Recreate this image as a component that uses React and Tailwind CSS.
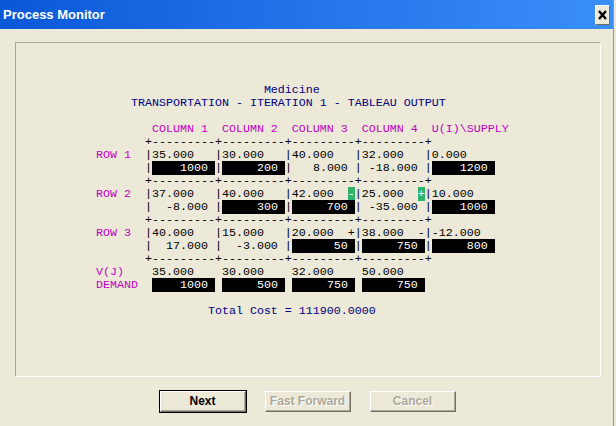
import React from "react";

const DASH = [["       +---------+---------+---------+---------+", "n"]];

const LINES = [
  [["                        Medicine", "b"]],
  [["     TRANSPORTATION - ITERATION 1 - TABLEAU OUTPUT", "b"]],
  [],
  [["        COLUMN 1  COLUMN 2  COLUMN 3  COLUMN 4  U(I)\\SUPPLY", "m"]],
  DASH,
  [["ROW 1", "m"], ["  |35.000   |30.000   |40.000   |32.000   |0.000", "n"]],
  [["       |", "n"], ["    1000 ", "k"], ["|", "n"], ["     200 ", "k"], ["|   8.000 | -18.000 |", "n"], ["    1200 ", "k"]],
  DASH,
  [["ROW 2", "m"], ["  |37.000   |40.000   |42.000  ", "n"], ["-", "g"], ["|25.000  ", "n"], ["+", "g"], ["|10.000", "n"]],
  [["       |  -8.000 |", "n"], ["     300 ", "k"], ["|", "n"], ["     700 ", "k"], ["| -35.000 |", "n"], ["    1000 ", "k"]],
  DASH,
  [["ROW 3", "m"], ["  |40.000   |15.000   |20.000  +|38.000  -|-12.000", "n"]],
  [["       |  17.000 |  -3.000 |", "n"], ["      50 ", "k"], ["|", "n"], ["     750 ", "k"], ["|", "n"], ["     800 ", "k"]],
  DASH,
  [["V(J)", "m"], ["    35.000    30.000    32.000    50.000", "n"]],
  [["DEMAND", "m"], ["  ", "n"], ["    1000 ", "k"], [" ", "n"], ["     500 ", "k"], [" ", "n"], ["     750 ", "k"], [" ", "n"], ["     750 ", "k"]],
  [],
  [["                Total Cost = 111900.0000", "b"]],
];

function Seg({ text, kind }) {
  if (kind === "m") return <span className="text-[#C000C0]">{text}</span>;
  if (kind === "b") return <span className="text-[#000080]">{text}</span>;
  if (kind === "k") return <span className="bg-black text-white">{text}</span>;
  if (kind === "g") return <span className="bg-[#2DB36B] text-white">{text}</span>;
  return <span className="text-black">{text}</span>;
}

function XPButton({ children, primary, disabled }) {
  return (
    <div
      className={
        "w-[88px] h-[23px] " +
        (primary ? "border border-black" : "border border-transparent")
      }
    >
      <div className="w-full h-full border-t border-l border-t-white border-l-white border-b border-r border-b-[#716F64] border-r-[#716F64] bg-[#ECE9D8]">
        <div className="w-full h-full border-b border-r border-b-[#ACA899] border-r-[#ACA899] flex items-center justify-center">
          <span
            className={
              "font-bold text-[12px] leading-none " +
              (disabled ? "text-[#ACA899] [text-shadow:1px_1px_0_#ffffff]" : "text-black")
            }
            style={{ fontFamily: '"Liberation Sans", Arial, sans-serif' }}
          >
            {children}
          </span>
        </div>
      </div>
    </div>
  );
}

export default function App() {
  return (
    <div className="w-[616px] h-[426px] bg-[#ECE9D8] overflow-hidden flex flex-col">
      <div className="w-[614px] h-[426px] flex flex-col border-r border-r-[#9A9890]">
        {/* Title bar */}
        <div className="h-[29px] bg-gradient-to-r from-[#0A58D8] to-[#3A8EF8] flex items-center justify-between pl-[3px] pr-[3px]">
          <span
            className="text-white font-bold text-[13px] leading-none"
            style={{ fontFamily: '"Liberation Sans", Arial, sans-serif' }}
          >
            Process Monitor
          </span>
          <div className="w-[15px] h-[20px] bg-[#ECE9D8] border-t border-l border-t-white border-l-white border-b border-r border-b-[#716F64] border-r-[#716F64] flex items-center justify-center">
            <svg width="9" height="10" viewBox="0 0 9 10">
              <path d="M1 1 L8 9 M8 1 L1 9" stroke="#000" strokeWidth="2.4" />
            </svg>
          </div>
        </div>

        {/* Body */}
        <div className="flex-1 flex flex-col">
          <div className="ml-[15px] mt-[13px] w-[586px] h-[335px] border-t border-l border-t-[#ACA899] border-l-[#ACA899] border-b border-r border-b-white border-r-white">
            <div
              className="pt-[41px] pl-[80px] text-[11.67px] leading-[13px] whitespace-pre"
              style={{ fontFamily: '"Liberation Mono", "Courier New", monospace' }}
            >
              {LINES.map((segs, i) => (
                <div key={i} className="h-[13px]">
                  {segs.map(([t, k], j) => (
                    <Seg key={j} text={t} kind={k} />
                  ))}
                </div>
              ))}
            </div>
          </div>

          <div className="mt-[13px] pl-[159px] flex gap-[17px]">
            <XPButton primary>Next</XPButton>
            <XPButton disabled>Fast Forward</XPButton>
            <XPButton disabled>Cancel</XPButton>
          </div>
        </div>
      </div>
    </div>
  );
}
